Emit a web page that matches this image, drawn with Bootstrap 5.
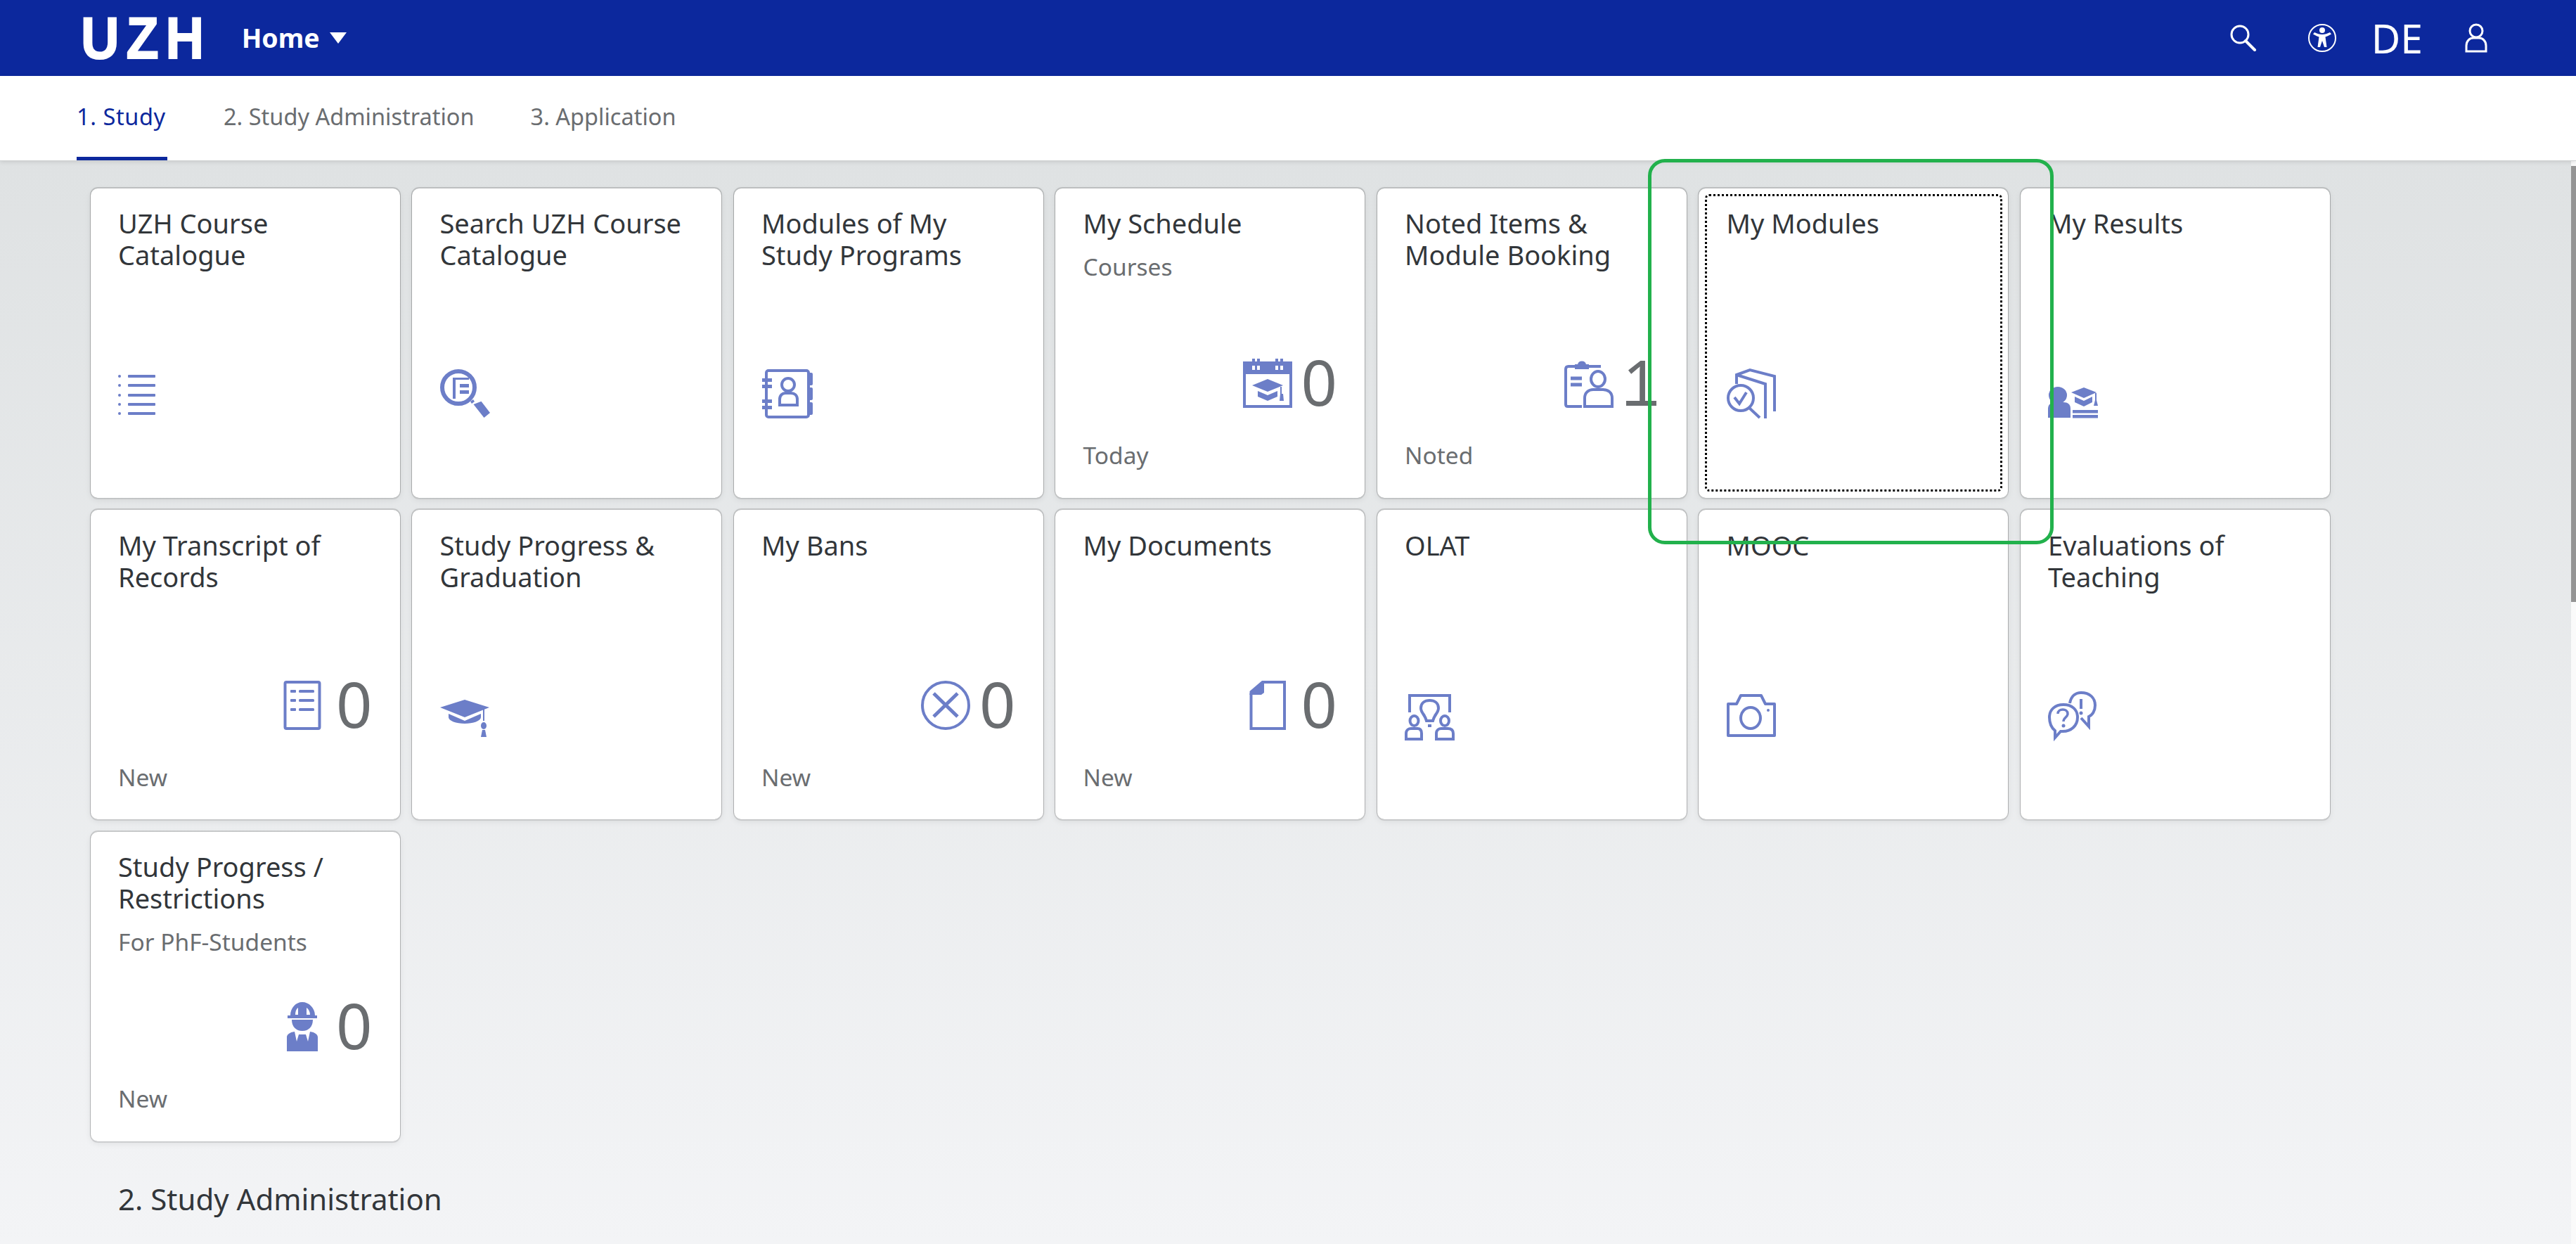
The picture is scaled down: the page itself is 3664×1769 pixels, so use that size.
<!DOCTYPE html>
<html lang="en">
<head>
<meta charset="utf-8">
<title>UZH Home</title>
<link href="https://cdn.jsdelivr.net/npm/bootstrap@5.3.0/dist/css/bootstrap.min.css" rel="stylesheet">
<style>
html,body{height:100%;overflow:hidden}
body{font-family:"Noto Sans",sans-serif;color:#32363a;background:#f2f3f5}
.uzh-shell{height:100vh}
.uzh-top{background:#0c289d;height:108px;padding:0 126px 0 115px;flex-wrap:nowrap}
.uzh-logo{font-family:"Liberation Sans",sans-serif;font-weight:700;font-size:84px;line-height:108px;letter-spacing:11px;-webkit-text-stroke:2px #fff;color:#fff;padding:0;margin:0 23px 0 0;display:inline-block;transform:scaleX(.9);transform-origin:left center}
.uzh-home{font-weight:700;font-size:37.5px;color:#fff;padding:0}
.uzh-caret{width:24px;height:16px;margin-left:14px}
.uzh-srch{margin-right:72px}
.uzh-de{font-size:57px;line-height:1;color:#fff;margin:0 60px 0 49px}
.uzh-tabs{background:#fff;height:120px;padding-left:109px;gap:80px;box-shadow:0 1px 0 #cfd2d3,0 2px 6px rgba(0,0,0,.12);position:relative;z-index:2;flex-wrap:nowrap}
.uzh-tabs .nav-link{padding:0;height:120px;line-height:116px;font-size:32.5px;color:#6a6d70}
.uzh-tabs .nav-link.active{color:#0c289d;border-bottom:5px solid #0c289d;width:129px;white-space:nowrap;letter-spacing:.6px}
.uzh-main{flex:1 1 auto;min-height:0;position:relative;overflow:hidden;background:linear-gradient(#dfe2e3,#f3f4f6);padding:39.5px 0 0 128.5px}
.uzh-grid{display:grid;grid-template-columns:repeat(7,440px);grid-auto-rows:440px;gap:17.5px}
.uzh-tile{height:440px;border:0;border-radius:10px;background:#fff;box-shadow:0 -1px 0 1px rgba(0,0,0,.14),0 1px 0 1px rgba(0,0,0,.1),0 3px 10px rgba(0,0,0,.08);padding:27.5px 39px 0 39.5px;display:flex;flex-direction:column}
.uzh-focus{position:absolute;inset:8.5px;border:3px dotted #000;border-radius:6px;pointer-events:none}
.uzh-head{flex:1 1 auto}
.uzh-title{font-size:38px;line-height:45px;color:#32363a;margin:0}
.uzh-sub{font-size:33.5px;line-height:45px;color:#6a6d70;margin:17px 0 0}
.uzh-row{height:70px;margin-bottom:15px;gap:13px}
.uzh-num{font-size:90px;line-height:76px;font-weight:400;color:#6a6d70;position:relative}
.uzh-one::after{content:"";position:absolute;left:5px;right:4px;top:66px;height:7px;background:#6a6d70}
.uzh-foot{height:112.5px;font-size:33.5px;line-height:45px;color:#6a6d70;padding-top:30px}
.uzh-ico{display:block;width:70px;height:70px;flex:none;color:#6c7ec8;overflow:visible}
.uzh-sec{font-size:42px;font-weight:400;line-height:60px;margin:52.5px 0 0 39.5px;color:#32363a}
.uzh-track{position:absolute;top:0;right:0;bottom:0;width:7px;background:#fafafa}
.uzh-thumb{position:absolute;top:8px;left:0;width:7px;height:620px;background:#949494}
.uzh-mark{position:absolute;left:2344px;top:226px;width:577px;height:548px;border:5px solid #22b14c;border-radius:24px;z-index:5;pointer-events:none}
</style>
</head>
<body>
<div class="uzh-shell d-flex flex-column">
  <nav class="navbar uzh-top d-flex align-items-center">
    <span class="navbar-brand uzh-logo">UZH</span>
    <a class="nav-link uzh-home d-flex align-items-center" href="#">Home<svg class="uzh-caret" viewBox="0 0 24 16"><path d="M0 0H24L12 16Z" fill="#fff"/></svg></a>
    <div class="ms-auto d-flex align-items-center">
      <svg class="uzh-srch" width="38" height="38" viewBox="0 0 38 38" fill="none" stroke="#fff"><circle cx="14" cy="14" r="12" stroke-width="3"/><path d="M22 23L35 36" stroke-width="4" stroke-linecap="round"/></svg>
      <svg width="42" height="42" viewBox="0 0 42 42"><circle cx="21" cy="21" r="19" fill="none" stroke="#fff" stroke-width="2"/><circle cx="21" cy="10" r="4" fill="#fff"/><path d="M8 15.5L10 13C14 15 17 16 21 16S28 15 32 13L34 15.5C30 18 27 19 25.5 19.5L27.5 34H24L21 25L18 34H14.5L16.500 19.500C15 19 12 18 8 15.500Z" fill="#fff"/></svg>
      <span class="uzh-de">DE</span>
      <svg width="32" height="42" viewBox="0 0 32 42" fill="none" stroke="#fff" stroke-width="3"><ellipse cx="16" cy="11" rx="9" ry="9"/><path d="M2 40V32C2 25 7 21 12 21H20C25 21 30 25 30 32V40Z"/></svg>
    </div>
  </nav>
  <ul class="nav uzh-tabs">
    <li class="nav-item"><a class="nav-link active" href="#">1. Study</a></li>
    <li class="nav-item"><a class="nav-link" href="#">2. Study Administration</a></li>
    <li class="nav-item"><a class="nav-link" href="#">3. Application</a></li>
  </ul>
  <main class="uzh-main">
    <div class="uzh-grid">

      <div class="card uzh-tile"><div class="uzh-head"><p class="uzh-title">UZH Course Catalogue</p></div>
        <svg class="uzh-ico" viewBox="0 0 70 70" fill="currentColor"><g><rect y="8" width="4" height="4" rx="2"/><rect y="21" width="4" height="4" rx="2"/><rect y="35" width="4" height="4" rx="2"/><rect y="48" width="4" height="4" rx="2"/><rect y="61" width="4" height="4" rx="2"/><rect x="14" y="8" width="39" height="4" rx="1"/><rect x="14" y="21" width="39" height="4" rx="1"/><rect x="14" y="35" width="39" height="4" rx="1"/><rect x="14" y="48" width="39" height="4" rx="1"/><rect x="14" y="61" width="39" height="4" rx="1"/></g></svg>
        <div class="uzh-foot"></div></div>

      <div class="card uzh-tile"><div class="uzh-head"><p class="uzh-title">Search UZH Course Catalogue</p></div>
        <svg class="uzh-ico" viewBox="0 0 70 70" fill="currentColor"><circle cx="26" cy="26" r="23" fill="none" stroke="currentColor" stroke-width="6"/><path d="M47.500 50L62.500 69L71 62L58.500 45.700Z"/><path d="M43 46L47 43L49 46L45 49Z"/><path d="M18 12H41V15H22V42H18Z"/><rect x="28" y="21" width="13" height="5"/><rect x="28" y="30" width="13" height="5"/></svg>
        <div class="uzh-foot"></div></div>

      <div class="card uzh-tile"><div class="uzh-head"><p class="uzh-title">Modules of My Study Programs</p></div>
        <svg class="uzh-ico" viewBox="0 0 70 70" fill="currentColor"><rect x="7" y="2" width="60" height="66" rx="3" fill="none" stroke="currentColor" stroke-width="4"/><rect x="1" y="13" width="14" height="5"/><rect x="1" y="22" width="14" height="5"/><rect x="1" y="43" width="14" height="5"/><rect x="1" y="52" width="14" height="5"/><rect x="66" y="5" width="7" height="18" rx="2"/><rect x="66" y="26" width="7" height="18" rx="2"/><rect x="66" y="47" width="7" height="18" rx="2"/><ellipse cx="38" cy="22" rx="9" ry="9" fill="none" stroke="currentColor" stroke-width="4"/><path d="M26 51V43C26 37 30 34 34 34H42C47 34 51 37 51 43V51Z" fill="none" stroke="currentColor" stroke-width="4"/></svg>
        <div class="uzh-foot"></div></div>

      <div class="card uzh-tile"><div class="uzh-head"><p class="uzh-title">My Schedule</p><p class="uzh-sub">Courses</p></div>
        <div class="uzh-row d-flex justify-content-end align-items-end">
          <svg class="uzh-ico" viewBox="0 0 70 70" fill="currentColor"><path d="M0 4H13V0H17V4H20V0H24V4H46V0H50V4H53V0H57V4H70V70H0ZM4 22V66H66V22Z" fill-rule="evenodd"/><rect x="13" y="10" width="4" height="6" fill="#fff"/><rect x="20" y="10" width="4" height="6" fill="#fff"/><rect x="46" y="10" width="4" height="6" fill="#fff"/><rect x="53" y="10" width="4" height="6" fill="#fff"/><path d="M13 38L35 29L57 38L35 47Z"/><path d="M21 46L35 52L49 46V54L35 60L21 54Z"/><path d="M53 40H55V50H57L58 60H52L53 50Z"/></svg>
          <span class="uzh-num">0</span></div>
        <div class="uzh-foot">Today</div></div>

      <div class="card uzh-tile"><div class="uzh-head"><p class="uzh-title">Noted Items &amp; Module Booking</p></div>
        <div class="uzh-row d-flex justify-content-end align-items-end">
          <svg class="uzh-ico" viewBox="0 0 70 70" fill="none" stroke="currentColor" stroke-width="4"><path d="M25 68H5Q2 68 2 65V15Q2 11 6 11H16M34 11H52"/><path d="M16 14V9H20C20 3 30 3 30 9H34V14Z" fill="currentColor" stroke-width="2"/><path d="M9 28H25M9 37H25" stroke-width="5"/><ellipse cx="48" cy="29" rx="10" ry="11"/><path d="M29 68V56C29 48 35 44 41 44H55C62 44 68 48 68 56V68Z"/></svg>
          <span class="uzh-num uzh-one">1</span></div>
        <div class="uzh-foot">Noted</div></div>

      <div class="card uzh-tile"><div class="uzh-focus"></div><div class="uzh-head"><p class="uzh-title">My Modules</p></div>
        <svg class="uzh-ico" viewBox="0 0 70 70" fill="none" stroke="currentColor" stroke-width="4"><path d="M14 21V8L33 1L68 10V60"/><path d="M14 8L55 21V70"/><circle cx="20" cy="41" r="18"/><path d="M32 55L47 69"/><path d="M11 40L18 49L28 33"/></svg>
        <div class="uzh-foot"></div></div>

      <div class="card uzh-tile"><div class="uzh-head"><p class="uzh-title">My Results</p></div>
        <svg class="uzh-ico" viewBox="0 0 70 70" fill="currentColor"><ellipse cx="14" cy="37" rx="13" ry="12"/><path d="M0 69V56C0 50 5 47 10 47H22C28 47 32 50 32 56V69Z"/><path d="M33 33L51 26L69 33L51 41Z"/><path d="M38 39L51 45L63 39V47L51 53L38 47Z"/><path d="M67 34H69V44L71 52H65L67 44Z"/><rect x="35" y="58" width="36" height="4.500"/><rect x="35" y="65" width="36" height="4.500"/></svg>
        <div class="uzh-foot"></div></div>

      <div class="card uzh-tile"><div class="uzh-head"><p class="uzh-title">My Transcript of Records</p></div>
        <div class="uzh-row d-flex justify-content-end align-items-end">
          <svg class="uzh-ico" viewBox="0 0 70 70" fill="currentColor"><rect x="10.500" y="2" width="49" height="66" rx="2" fill="none" stroke="currentColor" stroke-width="4"/><rect x="18" y="13" width="8" height="4" rx="1"/><rect x="30" y="13" width="22" height="4" rx="1.500"/><rect x="18" y="26" width="8" height="4" rx="1"/><rect x="30" y="26" width="22" height="4" rx="1.500"/><rect x="18" y="39" width="8" height="4" rx="1"/><rect x="30" y="39" width="22" height="4" rx="1.500"/></svg>
          <span class="uzh-num">0</span></div>
        <div class="uzh-foot">New</div></div>

      <div class="card uzh-tile"><div class="uzh-head"><p class="uzh-title">Study Progress &amp; Graduation</p></div>
        <svg class="uzh-ico" viewBox="0 0 70 70" fill="currentColor"><path d="M0 23L35 12L70 23L35 37Z"/><path d="M12 32L35 42L58 32V37C58 42 47 46 35 46S12 42 12 37Z"/><rect x="61" y="25" width="2" height="17"/><ellipse cx="62" cy="49" rx="4" ry="5"/><path d="M60 55H64L66 65H58Z"/></svg>
        <div class="uzh-foot"></div></div>

      <div class="card uzh-tile"><div class="uzh-head"><p class="uzh-title">My Bans</p></div>
        <div class="uzh-row d-flex justify-content-end align-items-end">
          <svg class="uzh-ico" viewBox="0 0 70 70" fill="none" stroke="currentColor"><circle cx="35" cy="35" r="33" stroke-width="4"/><path d="M18 18L52 51M52 18L18 51" stroke-width="5"/></svg>
          <span class="uzh-num">0</span></div>
        <div class="uzh-foot">New</div></div>

      <div class="card uzh-tile"><div class="uzh-head"><p class="uzh-title">My Documents</p></div>
        <div class="uzh-row d-flex justify-content-end align-items-end">
          <svg class="uzh-ico" viewBox="0 0 70 70" fill="none" stroke="currentColor" stroke-width="4"><path d="M27 2H59V68H11.500V18"/><path d="M9.500 15L27 0H30V17L26 20H9.500Z" fill="currentColor" stroke="none"/></svg>
          <span class="uzh-num">0</span></div>
        <div class="uzh-foot">New</div></div>

      <div class="card uzh-tile"><div class="uzh-head"><p class="uzh-title">OLAT</p></div>
        <svg class="uzh-ico" viewBox="0 0 70 70" fill="none" stroke="currentColor" stroke-width="4"><path d="M7 30V6H64V30"/><path d="M31 42C29 33 23 31 23 24C23 16 29 13 35.500 13S48 16 48 24C48 31 42 33 40 42Z"/><rect x="33" y="47" width="5" height="4" fill="currentColor" stroke="none"/><ellipse cx="13.500" cy="42" rx="6" ry="7"/><ellipse cx="57" cy="42" rx="6" ry="7"/><path d="M2 68V60C2 55 6 53 9 53H18C22 53 24 55 24 60V68Z"/><path d="M45 68V60C45 55 49 53 52 53H61C66 53 69 55 69 60V68Z"/></svg>
        <div class="uzh-foot"></div></div>

      <div class="card uzh-tile"><div class="uzh-head"><p class="uzh-title">MOOC</p></div>
        <svg class="uzh-ico" viewBox="0 0 70 70" fill="none" stroke="currentColor" stroke-width="4"><path d="M14 18L20 6H49L55 18H68V63H2V18Z" stroke-linejoin="round"/><ellipse cx="34" cy="38" rx="14" ry="15"/><circle cx="59" cy="27" r="2" fill="currentColor" stroke="none"/></svg>
        <div class="uzh-foot"></div></div>

      <div class="card uzh-tile"><div class="uzh-head"><p class="uzh-title">Evaluations of Teaching</p></div>
        <svg class="uzh-ico" viewBox="0 0 70 70" fill="none" stroke="currentColor" stroke-width="4"><path d="M31 17C33 6 40 2 47 2C59 2 67 9 67 20C67 28 63 34 58 36V50L47 38"/><path d="M10 66V56C5 52 2 45 2 37C2 26 10 19 22 19S42 26 42 37C42 49 33 57 21 57H18Z" fill="#fff"/><path d="M14 32C14 24 28 24 28 32C28 37 22 37 22 43" stroke-width="3.500"/><circle cx="22" cy="49" r="2.500" fill="currentColor" stroke="none"/><path d="M47 11V25" stroke-width="4"/><circle cx="47" cy="31" r="2.500" fill="currentColor" stroke="none"/></svg>
        <div class="uzh-foot"></div></div>

      <div class="card uzh-tile"><div class="uzh-head"><p class="uzh-title">Study Progress / Restrictions</p><p class="uzh-sub">For PhF-Students</p></div>
        <div class="uzh-row d-flex justify-content-end align-items-end">
          <svg class="uzh-ico" viewBox="0 0 70 70" fill="currentColor"><path d="M18 19C18 8 26 0 35 0S53 8 53 19H56V23H14V19ZM25 18H29V8C26 10 25 14 25 18ZM41 8V18H46C46 14 44 10 41 8Z" fill-rule="evenodd"/><path d="M20 25H50C50 35 44 41 35 41S20 35 20 25Z"/><path d="M13 70V50C13 46 17 43 24 42L27 56L30 46H40L43 56L46 42C53 43 57 46 57 50V70Z"/></svg>
          <span class="uzh-num">0</span></div>
        <div class="uzh-foot">New</div></div>
    </div>
    <h2 class="uzh-sec">2. Study Administration</h2>
    <div class="uzh-track"><div class="uzh-thumb"></div></div>
  </main>
</div>
<div class="uzh-mark"></div>
<script src="https://cdn.jsdelivr.net/npm/bootstrap@5.3.0/dist/js/bootstrap.bundle.min.js"></script>
</body>
</html>
